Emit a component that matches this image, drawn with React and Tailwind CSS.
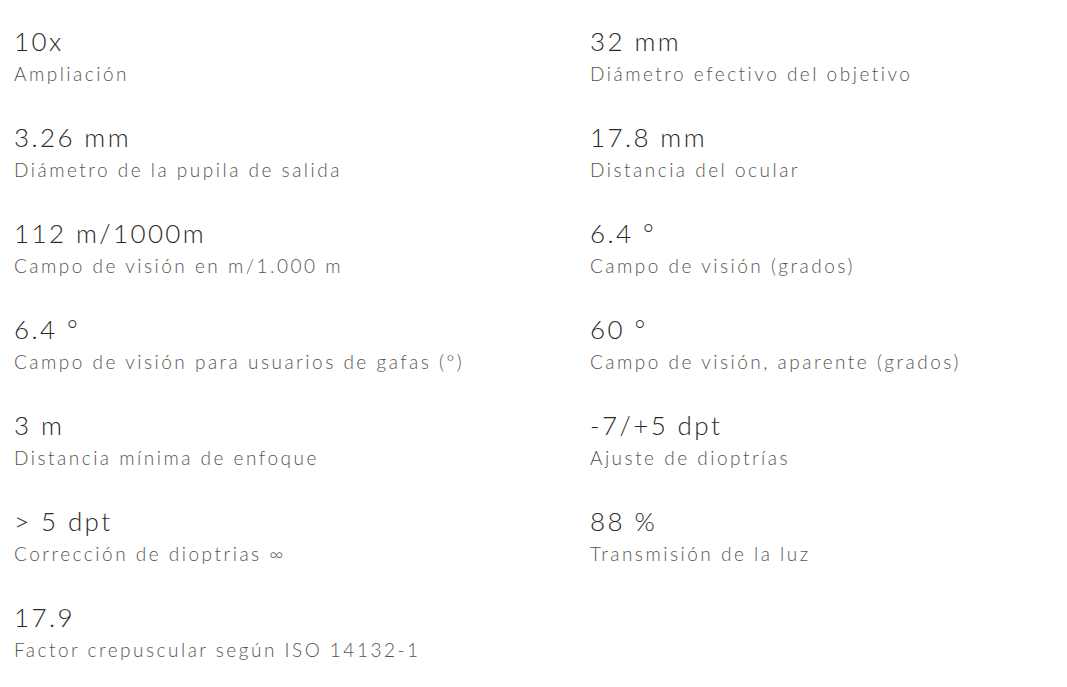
export default function App() {
  const items = [
    ["10x", "Ampliación"],
    ["32 mm", "Diámetro efectivo del objetivo"],
    ["3.26 mm", "Diámetro de la pupila de salida"],
    ["17.8 mm", "Distancia del ocular"],
    ["112 m/1000m", "Campo de visión en m/1.000 m"],
    ["6.4 °", "Campo de visión (grados)"],
    ["6.4 °", "Campo de visión para usuarios de gafas (°)"],
    ["60 °", "Campo de visión, aparente (grados)"],
    ["3 m", "Distancia mínima de enfoque"],
    ["-7/+5 dpt", "Ajuste de dioptrías"],
    ["> 5 dpt", "Corrección de dioptrias ∞"],
    ["88 %", "Transmisión de la luz"],
    ["17.9", "Factor crepuscular según ISO 14132-1"],
  ];
  return (
    <div className="min-h-[687px] bg-white pl-[14px] pt-[23px] font-['Lato',sans-serif]">
      <div className="grid grid-cols-[576px_1fr] gap-y-[30px]">
        {items.map(([v, l], i) => (
          <div key={i} className="flex flex-col">
            <div className="text-[26px] leading-[36px] font-light tracking-[2.4px] text-[#2a2a2a]">{v}</div>
            <div className="text-[19px] leading-[30px] font-light tracking-[2.5px] text-[#555]">{l}</div>
          </div>
        ))}
      </div>
    </div>
  );
}
